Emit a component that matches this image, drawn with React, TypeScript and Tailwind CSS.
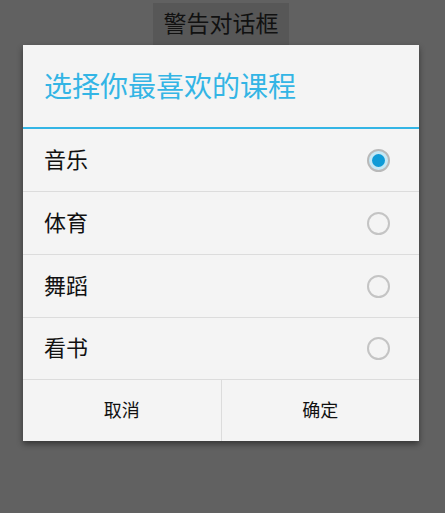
import { useState } from 'react'

const courses = ['音乐', '体育', '舞蹈', '看书']

const font = { fontFamily: '"Roboto", "Noto Sans CJK SC", sans-serif' }

function Radio({ checked }: { checked: boolean }) {
  return checked ? (
    <span className="flex h-[23px] w-[23px] items-center justify-center rounded-full border-2 border-[#b9b9b9] bg-[#c6e8f5]">
      <span className="h-[13px] w-[13px] rounded-full bg-[#0f9bd7]" />
    </span>
  ) : (
    <span className="h-[23px] w-[23px] rounded-full border-2 border-[#c4c4c4]" />
  )
}

export default function App() {
  const [selected, setSelected] = useState(0)

  return (
    <div className="flex h-[513px] w-[445px] flex-col items-start bg-[#616161]" style={font}>
      {/* trigger button, half hidden under the dialog */}
      <div className="ml-[153px] mt-[3px] flex h-[42px] w-[136px] items-center justify-center bg-[#575757] pt-[3px] text-[23px] text-[#111]">
        警告对话框
      </div>

      {/* dialog */}
      <div className="ml-[23px] w-[396px] bg-[#f4f4f4] shadow-[0_3px_6px_rgba(0,0,0,0.45)]">
        <div className="flex h-[82px] items-center px-[21px] pt-[3px] text-[28px] text-[#33b5e5]">
          选择你最喜欢的课程
        </div>
        <div className="h-[2px] bg-[#33b5e5]" />

        {courses.map((c, i) => (
          <div
            key={c}
            onClick={() => setSelected(i)}
            className={`flex items-center justify-between border-b border-[#dcdcdc] pl-[21px] pr-[29px] text-[22px] text-[#111] ${
              i === courses.length - 1 ? 'h-[62px]' : 'h-[63px]'
            }`}
          >
            <span>{c}</span>
            <Radio checked={selected === i} />
          </div>
        ))}

        <div className="flex h-[61px] text-[18px] text-[#111]">
          <button className="flex flex-1 items-center justify-center border-r border-[#dcdcdc]">取消</button>
          <button className="flex flex-1 items-center justify-center">确定</button>
        </div>
      </div>
    </div>
  )
}
